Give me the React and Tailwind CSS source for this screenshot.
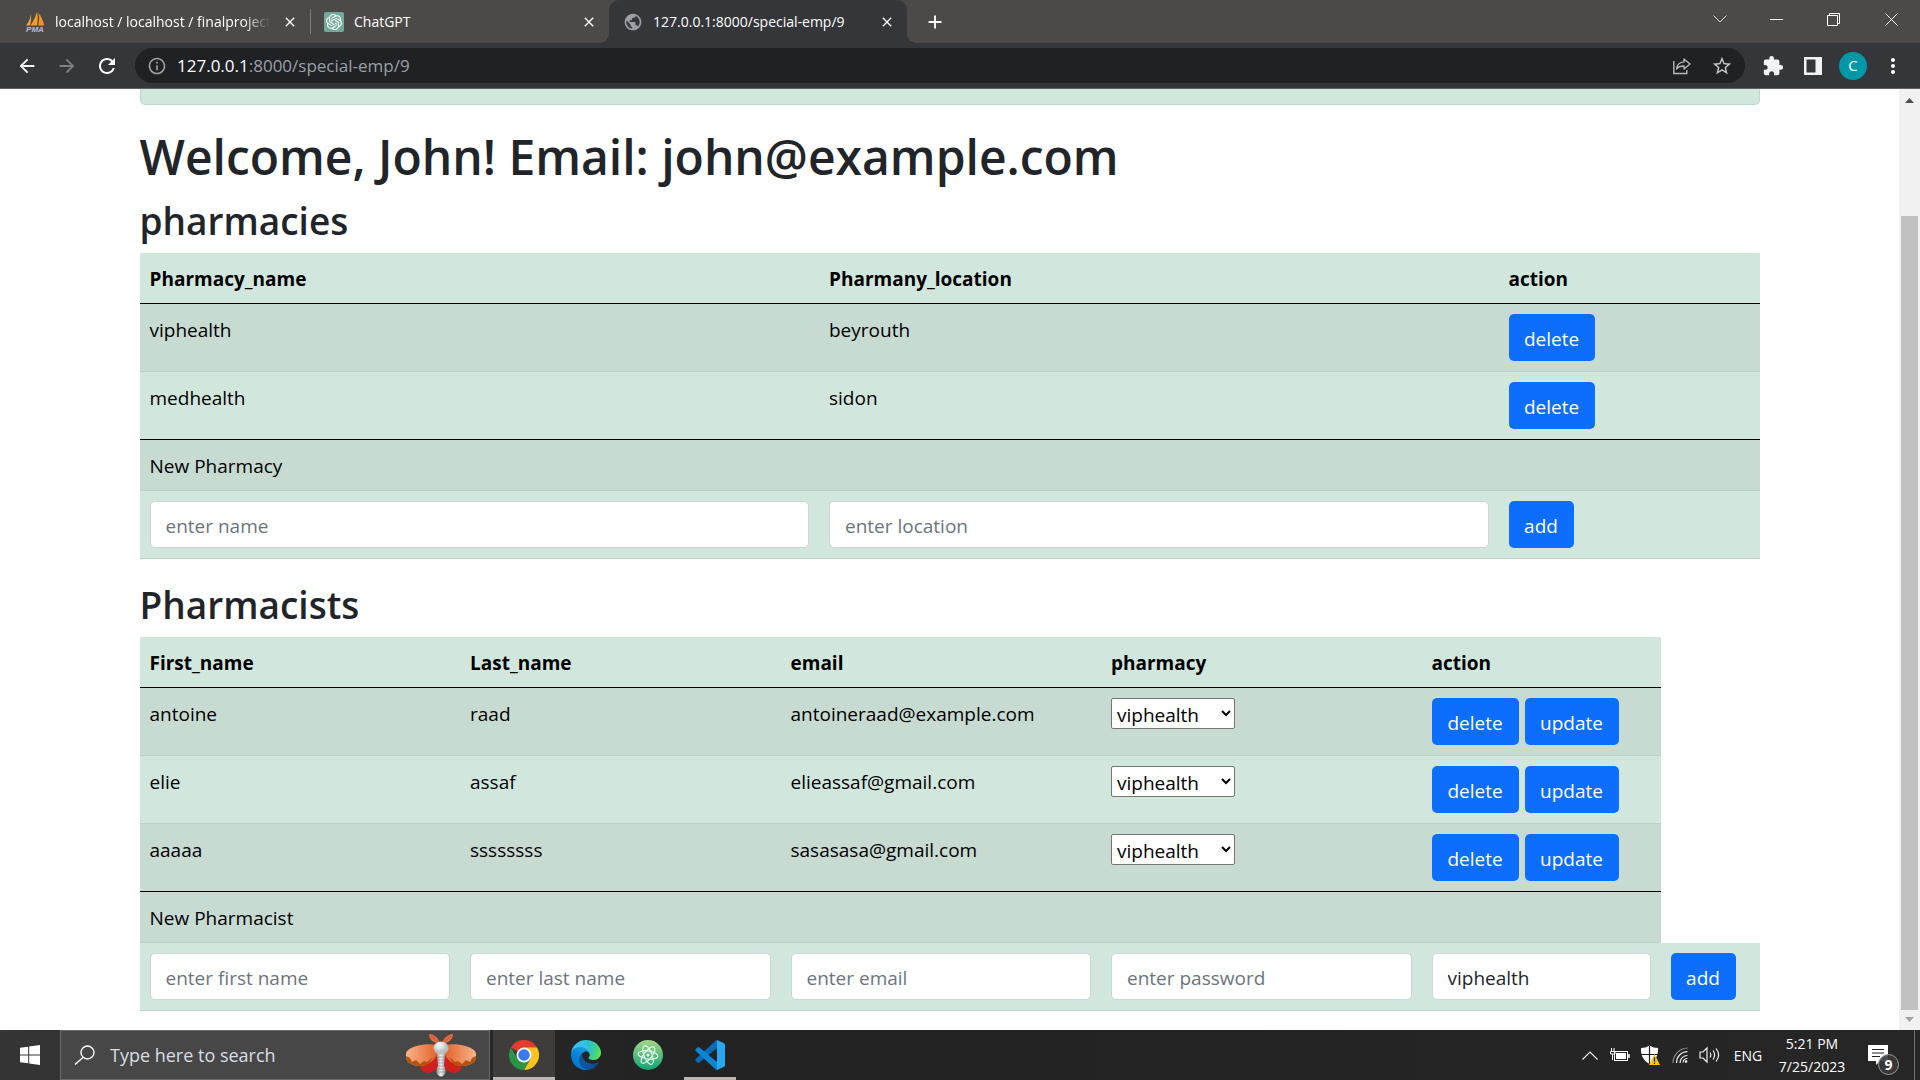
import React from "react";
import {
  MdArrowBack,
  MdArrowForward,
  MdRefresh,
  MdInfoOutline,
  MdStarBorder,
  MdExtension,
  MdPublic,
  MdMoreVert,
  MdClose,
  MdAdd,
} from "react-icons/md";
import { SiOpenai } from "react-icons/si";

/* ---------- icons ---------- */

function SailIcon() {
  return (
    <svg viewBox="0 0 20 20" className="size-5 shrink-0" aria-hidden="true">
      <path d="M6 2C5.500 6 4 10 1 13.500h4C6 10 6.300 6 6 2z" fill="#f0a640" />
      <path d="M12 0C10.500 5 8 10 5.500 13.500h6.500C13 9 13 4 12 0z" fill="#f59a23" />
      <path d="M13.500 1c1 4.500.8 9-.3 12.500H19C18.500 9 16 4 13.500 1z" fill="#f7931e" />
      <text x="10" y="19.500" textAnchor="middle" fontSize="8" fontWeight="700" fontStyle="italic" fontFamily="Liberation Sans, sans-serif" fill="#b9b9dc">PMA</text>
    </svg>
  );
}

function ShareIcon() {
  return (
    <svg viewBox="0 0 20 20" className="size-5" fill="none" stroke="#b4b6ba" strokeWidth="1.400" aria-hidden="true">
      <path d="M1.800 5v12.500h13V14" />
      <path d="M12 3l6 5-6 5v-3c-3.500 0-5.800.8-7.500 3C5 9 7.500 6.200 12 5.900z" strokeLinejoin="round" />
    </svg>
  );
}

function SidePanelIcon() {
  return (
    <svg viewBox="0 0 18 18" className="size-[18px]" aria-hidden="true">
      <path fillRule="evenodd" d="M0 0h18v18H0zM2.500 2.500v13h9v-13z" fill="#f1f3f4" />
    </svg>
  );
}

function WindowsIcon() {
  return (
    <svg viewBox="0 0 20 20" className="size-5" fill="#fff" aria-hidden="true">
      <path d="M0 2.800l8.200-1.100v7.800H0zM9.200 1.500L20 0v9.500H9.200zM0 10.500h8.200v7.800L0 17.200zM9.200 10.500H20V20L9.200 18.500z" />
    </svg>
  );
}

function MothIcon() {
  return (
    <svg viewBox="0 0 72 44" className="h-11 w-[72px]" aria-hidden="true">
      <defs>
        <linearGradient id="wingL" x1="0" x2="1">
          <stop offset="0" stopColor="#f7b48a" />
          <stop offset="1" stopColor="#e2622a" />
        </linearGradient>
        <linearGradient id="wingR" x1="1" x2="0">
          <stop offset="0" stopColor="#f7b48a" />
          <stop offset="1" stopColor="#e2622a" />
        </linearGradient>
        <linearGradient id="mothBody" x1="0" x2="1">
          <stop offset="0" stopColor="#9a9a9a" />
          <stop offset="0.500" stopColor="#f2f2f2" />
          <stop offset="1" stopColor="#9a9a9a" />
        </linearGradient>
        <radialGradient id="mothHead" cx="0.400" cy="0.300">
          <stop offset="0" stopColor="#ffffff" />
          <stop offset="1" stopColor="#bdbdbd" />
        </radialGradient>
      </defs>
      <path d="M35 10C33 4 28 1 24 1c0 5 3 8 10 10z" fill="#e8693f" />
      <path d="M37 10C39 4 44 1 48 1c0 5-3 8-10 10z" fill="#e8693f" />
      <path d="M34 10L26 3M38 10l8-7" stroke="#b8402a" strokeWidth="0.700" />
      <path d="M32 20L15 35c4 7 14 7 19-3z" fill="#cf1f1f" />
      <path d="M40 20l17 15c-4 7-14 7-19-3z" fill="#cf1f1f" />
      <path d="M33 12C22 10 8 12 2 18c-2 3-1 8 1 11 5 4 12 5 17 3 6-2 11-7 13-12z" fill="url(#wingL)" />
      <path d="M39 12c11-2 25 0 31 6 2 3 1 8-1 11-5 4-12 5-17 3-6-2-11-7-13-12z" fill="url(#wingR)" />
      <path d="M1 23l4 2 2 4 4-2 4 4 4-3 3 1 6-5c-2 4-5 8-8 9-5 1-12 0-17-4-1-2-2-4-2-6z" fill="#b4530f" />
      <path d="M71 23l-4 2-2 4-4-2-4 4-4-3-3 1-6-5c2 4 5 8 8 9 5 1 12 0 17-4 1-2 2-4 2-6z" fill="#b4530f" />
      <path d="M32 20h8l-1 13c2 3 2 7 0 9-2 2-4 2-6 0-2-2-2-6 0-9z" fill="url(#mothBody)" />
      <path d="M33 24h6M33 27h6M33 30h6M33 33h6M32 36h8M32 39h8" stroke="#888" strokeWidth="0.600" />
      <ellipse cx="36" cy="15" rx="7.500" ry="6.500" fill="url(#mothHead)" />
    </svg>
  );
}

function ChromeIcon() {
  return (
    <svg viewBox="0 0 48 48" className="size-[30px]" aria-hidden="true">
      <path d="M24 24L3.200 12A24 24 0 0 1 44.800 12z" fill="#e33b2e" />
      <path d="M24 12h20.800A24 24 0 0 1 24 48l10.400-18z" fill="#fcc31e" />
      <path d="M34.400 30L24 48A24 24 0 0 1 3.200 12l10.400 18z" fill="#2b9446" />
      <circle cx="24" cy="24" r="12" fill="#fff" />
      <circle cx="24" cy="24" r="9.300" fill="#3a7bec" />
    </svg>
  );
}

function EdgeIcon() {
  return (
    <svg viewBox="0 0 256 256" className="size-[30px]" aria-hidden="true">
      <defs>
        <linearGradient id="edgeDark" x1="63" x2="241" y1="177" y2="177" gradientUnits="userSpaceOnUse">
          <stop offset="0" stopColor="#0c59a4" />
          <stop offset="1" stopColor="#114a8b" />
        </linearGradient>
        <linearGradient id="edgeBlue" x1="157" x2="46" y1="99" y2="221" gradientUnits="userSpaceOnUse">
          <stop offset="0" stopColor="#1b9de2" />
          <stop offset="0.200" stopColor="#1595df" />
          <stop offset="0.700" stopColor="#0680d7" />
          <stop offset="1" stopColor="#0078d4" />
        </linearGradient>
        <radialGradient id="edgeGreen" cx="26" cy="47" r="240" gradientUnits="userSpaceOnUse">
          <stop offset="0" stopColor="#35c1f1" />
          <stop offset="0.300" stopColor="#34c1ed" />
          <stop offset="0.600" stopColor="#2fc2c4" />
          <stop offset="0.850" stopColor="#48d575" />
          <stop offset="1" stopColor="#66eb45" />
        </radialGradient>
      </defs>
      <path fill="url(#edgeDark)" d="M231,190.5c-3.4,1.8-6.9,3.4-10.5,4.7a101.5,101.5,0,0,1-35.8,6.5c-47.2,0-88.3-32.4-88.3-74.2A31.5,31.5,0,0,1,112.8,100.2c-42.7,1.8-53.7,46.3-53.7,72.3,0,73.7,67.8,81.1,82.5,81.1,7.9,0,19.8-2.3,27-4.6l1.3-.4a128.3,128.3,0,0,0,66.6-52.8,4,4,0,0,0-5.4-5.4Z" />
      <path fill="url(#edgeBlue)" d="M105.7,241.4a79.2,79.2,0,0,1-22.7-21.3A80.7,80.7,0,0,1,112.6,100.4c3.1-1.5,8.500-4.1,15.6-4a32.4,32.4,0,0,1,25.7,13,31.9,31.9,0,0,1,6.3,18.7c0-.2,24.5-79.6-80-79.6C36.3,48.5,0,90.2,0,126.9a130.6,130.6,0,0,0,12.1,56,128,128,0,0,0,156.4,67.1,75.6,75.6,0,0,1-62.8-8.5Z" />
      <path fill="url(#edgeGreen)" d="M152.3,148.9c-.8,1.1-3.3,2.5-3.3,5.7,0,2.6,1.7,5.1,4.7,7.2,14.4,10,41.5,8.7,41.6,8.7a59.6,59.6,0,0,0,30.3-8.3A61.4,61.4,0,0,0,256,109.2c.3-22.4-8-37.3-11.3-43.9C223.5,23.9,177.7,0,128,0A128,128,0,0,0,0,126.2c.5-36.5,36.8-66,80-66,3.5,0,23.5.3,42,10,16.3,8.6,24.9,18.9,30.8,29.2,6.2,10.7,7.3,24.1,7.3,29.5S157.3,142.3,152.3,148.9Z" />
    </svg>
  );
}

function AtomIcon() {
  return (
    <svg viewBox="0 0 30 30" className="size-[30px]" aria-hidden="true">
      <defs>
        <linearGradient id="atomBg" x1="0" x2="0" y1="0" y2="1">
          <stop offset="0" stopColor="#a5d58a" />
          <stop offset="1" stopColor="#0fa573" />
        </linearGradient>
      </defs>
      <circle cx="15" cy="15" r="15" fill="url(#atomBg)" />
      <g fill="none" stroke="#f2fbf4" strokeWidth="1.100">
        <ellipse cx="15" cy="15" rx="10" ry="4" transform="rotate(8 15 15)" />
        <ellipse cx="15" cy="15" rx="10" ry="4" transform="rotate(68 15 15)" />
        <ellipse cx="15" cy="15" rx="10" ry="4" transform="rotate(128 15 15)" />
      </g>
      <circle cx="15" cy="15" r="1.500" fill="#fff" />
    </svg>
  );
}

function CodeIcon() {
  return (
    <svg viewBox="0 0 30 30" className="size-[30px]" aria-hidden="true">
      <path d="M22 0v8L4.500 22.500a1.500 1.500 0 0 1-2 0L.7 20.800a1.300 1.300 0 0 1 0-1.900L20.500.8z" fill="#0a6cb4" />
      <path d="M22 30v-8L4.500 7.500a1.500 1.500 0 0 0-2 0L.7 9.200a1.300 1.300 0 0 0 0 1.900L20.500 29.200z" fill="#0b86d3" />
      <path d="M22 0l7 3.300a1.800 1.800 0 0 1 1 1.600v20.200a1.800 1.800 0 0 1-1 1.600L22 30z" fill="#27a9f1" />
    </svg>
  );
}

function BatteryIcon() {
  return (
    <svg viewBox="0 0 20 16" className="h-4 w-5" fill="none" stroke="#fff" aria-hidden="true">
      <rect x="4.500" y="4.500" width="13" height="9" />
      <path d="M6 6h10v6H6z" fill="#fff" stroke="none" />
      <path d="M19 7v4" strokeWidth="1.500" />
      <path d="M1.500 1v3M4 1v3M.5 4.500H5V7H.5zM2.500 7v6" />
    </svg>
  );
}

function ShieldIcon() {
  return (
    <svg viewBox="0 0 20 20" className="size-5" aria-hidden="true">
      <path d="M9.500.5C12 2.200 15 3 18 3c.3 7-2 12.500-8.500 16C3 15.500.7 10 1 3c3 0 6-.8 8.500-2.500z" fill="#fff" />
      <path d="M9.500.5V19M1 9.500h17" stroke="#1c1c1c" strokeWidth="1.200" />
      <path d="M14.500 9L20 20H9z" fill="#fcc419" />
      <path d="M14.500 12.500v4M14.500 17.500V19" stroke="#222" strokeWidth="1.300" />
    </svg>
  );
}

function WifiIcon() {
  return (
    <svg viewBox="0 0 16 16" className="size-4" fill="none" stroke="#e6e6e6" strokeWidth="1.200" aria-hidden="true">
      <path d="M1 16A15 15 0 0 1 15.500 1" stroke="#8d8d8d" />
      <path d="M4.500 16A11 11 0 0 1 15.500 4.700M8 16a7.500 7.500 0 0 1 7.500-7.500M11 15.500a4.500 4.500 0 0 1 4.500-4" />
      <circle cx="14" cy="14.500" r="1.300" fill="#fff" stroke="none" />
    </svg>
  );
}

function SpeakerIcon() {
  return (
    <svg viewBox="0 0 22 18" className="h-[18px] w-[22px]" fill="none" stroke="#eee" strokeWidth="1.200" aria-hidden="true">
      <path d="M1 6h3l4-4v14l-4-4H1z" />
      <path d="M11 6.500c1 1.500 1 3.500 0 5M14 4.500c2 2.800 2 6.200 0 9M17 2.500c3.200 4 3.200 9 0 13" />
    </svg>
  );
}

function NotificationIcon() {
  return (
    <svg viewBox="0 0 20 20" className="size-5" aria-hidden="true">
      <path d="M0 0h20v16h-8l-4 4v-4H0z" fill="#fff" />
      <path d="M4 4.500h12M4 8h12M4 11.500h8" stroke="#222" strokeWidth="1.200" />
    </svg>
  );
}

/* ---------- browser chrome ---------- */

function IconButton({ label, className = "", children }) {
  return (
    <button type="button" aria-label={label} className={`flex h-full items-center justify-center ${className}`}>
      {children}
    </button>
  );
}

function CloseTab() {
  return (
    <button type="button" aria-label="Close tab" className="flex size-5 shrink-0 items-center justify-center text-white">
      <MdClose className="size-4" />
    </button>
  );
}

function TabStrip() {
  return (
    <header className="flex h-[43px] shrink-0 bg-[#4c4a48] text-[14px] text-white">
      <div className="flex w-[310px] items-center gap-[10px] pr-[10px] pl-[25px]">
        <SailIcon />
        <span className="min-w-0 flex-1 overflow-hidden whitespace-nowrap [mask-image:linear-gradient(to_right,black_88%,transparent)]">
          localhost / localhost / finalproject
        </span>
        <CloseTab />
      </div>
      <div className="my-[9px] w-px bg-[#7d7b79]" />
      <div className="flex w-[298px] items-center gap-[10px] pr-[10px] pl-[13px]">
        <span className="flex size-5 shrink-0 items-center justify-center rounded-xs bg-[#74aa9c]">
          <SiOpenai className="size-4" />
        </span>
        <span className="min-w-0 flex-1">ChatGPT</span>
        <CloseTab />
      </div>
      <div className="relative flex w-[298px] items-center gap-[10px] rounded-t-[10px] bg-[#35363a] pr-[10px] pl-[14px]">
        <span className="absolute bottom-0 -left-[10px] size-[10px] bg-[radial-gradient(circle_at_0_0,transparent_10px,#35363a_10px)]" />
        <span className="absolute -right-[10px] bottom-0 size-[10px] bg-[radial-gradient(circle_at_100%_0,transparent_10px,#35363a_10px)]" />
        <MdPublic className="size-5 shrink-0 text-[#9aa0a6]" />
        <span className="min-w-0 flex-1 whitespace-nowrap">127.0.0.1:8000/special-emp/9</span>
        <CloseTab />
      </div>
      <IconButton label="New tab" className="w-14">
        <MdAdd className="size-[22px]" />
      </IconButton>
      <div className="ml-auto flex h-[38px]">
        <IconButton label="Search tabs" className="w-[57px]">
          <svg viewBox="0 0 14 8" className="h-2 w-[14px]" fill="none" stroke="#ddd"><path d="M.5.5L7 7 13.500.5" /></svg>
        </IconButton>
        <IconButton label="Minimize" className="w-[57px]">
          <span className="h-px w-[13px] bg-white" />
        </IconButton>
        <IconButton label="Restore" className="w-[57px]">
          <svg viewBox="0 0 13 13" className="size-[13px]" fill="none" stroke="#fff"><path d="M.5 2.500h10v10H.5zM2.500 2.500v-2h10v10h-2" /></svg>
        </IconButton>
        <IconButton label="Close" className="w-[58px]">
          <svg viewBox="0 0 13 13" className="size-[13px]" stroke="#fff"><path d="M.5.500l12 12M12.500.500l-12 12" /></svg>
        </IconButton>
      </div>
    </header>
  );
}

function Toolbar() {
  return (
    <nav className="flex h-[46px] shrink-0 items-center border-b border-[#5f6063] bg-[#35363a] pr-[7px] pl-[7px] text-white">
      <IconButton label="Back" className="w-10"><MdArrowBack className="size-[22px]" /></IconButton>
      <IconButton label="Forward" className="w-10 text-[#7f8084]"><MdArrowForward className="size-[22px]" /></IconButton>
      <IconButton label="Reload" className="w-10"><MdRefresh className="size-6" /></IconButton>
      <div className="ml-2 flex h-[35px] flex-1 items-center rounded-full bg-[#202124] pr-[3px] pl-3">
        <MdInfoOutline className="size-5 text-[#9aa0a6]" />
        <div className="ml-[10px] flex-1 text-[17px] text-[#9aa0a6]">
          <span className="text-white">127.0.0.1</span>:8000/special-emp/9
        </div>
        <IconButton label="Share" className="w-10"><ShareIcon /></IconButton>
        <IconButton label="Bookmark" className="w-10 text-[#c4c6ca]"><MdStarBorder className="size-[22px]" /></IconButton>
      </div>
      <IconButton label="Extensions" className="ml-2 w-10 text-[#f1f3f4]"><MdExtension className="size-[22px]" /></IconButton>
      <IconButton label="Side panel" className="w-10"><SidePanelIcon /></IconButton>
      <IconButton label="Profile" className="w-10">
        <span className="flex size-7 items-center justify-center rounded-full bg-[#0097a7] text-[15px]">C</span>
      </IconButton>
      <IconButton label="Menu" className="w-10"><MdMoreVert className="size-6" /></IconButton>
    </nav>
  );
}

/* ---------- page ---------- */

const control =
  "block h-[47px] w-full rounded-[5px] border border-[#ced4da] bg-white px-[15px] pt-[2px] text-[#212529] placeholder:text-[#6c757d]";

function Button({ className, children }) {
  return (
    <button type="button" className={`h-[47px] rounded-[5px] bg-[#0d6efd] pt-[2px] text-center text-white ${className}`}>
      {children}
    </button>
  );
}

function HeadCell({ children }) {
  return <th scope="col" className="h-[51px] border-b border-black bg-[#d1e7dd] px-[10px] pt-[2px] text-left font-bold">{children}</th>;
}

function Row({ striped, last, tall = true, children }) {
  return (
    <tr className={`align-top ${tall ? "h-[68px]" : "h-[51px]"} ${striped ? "*:bg-[#c7dbd2]" : "*:bg-[#d1e7dd]"} *:border-b ${last ? "*:border-black" : "*:border-[#bcd0c7]"} *:px-[10px] *:pt-[10px]`}>
      {children}
    </tr>
  );
}

function SectionTitle({ children }) {
  return <h2 className="mb-2 pt-[2px] text-[37px] leading-[48px] font-semibold text-[#212529]">{children}</h2>;
}

function Pharmacies() {
  const rows = [
    ["viphealth", "beyrouth"],
    ["medhealth", "sidon"],
  ];
  return (
    <table className="mb-5 w-full table-fixed border-separate border-spacing-0 text-black">
      <colgroup>
        <col />
        <col />
        <col className="w-[261px]" />
      </colgroup>
      <thead>
        <tr>
          <HeadCell>Pharmacy_name</HeadCell>
          <HeadCell>Pharmany_location</HeadCell>
          <HeadCell>action</HeadCell>
        </tr>
      </thead>
      <tbody>
        {rows.map(([name, place], i) => (
          <Row key={name} striped={i % 2 === 0} last={i === rows.length - 1}>
            <td>{name}</td>
            <td>{place}</td>
            <td><Button className="w-[86px]">delete</Button></td>
          </Row>
        ))}
        <Row striped tall={false}>
          <td colSpan={3}>New Pharmacy</td>
        </Row>
        <Row>
          <td><input aria-label="Pharmacy name" placeholder="enter name" className={control} /></td>
          <td><input aria-label="Pharmacy location" placeholder="enter location" className={control} /></td>
          <td><Button className="w-[65px]">add</Button></td>
        </Row>
      </tbody>
    </table>
  );
}

function Pharmacists() {
  const rows = [
    ["antoine", "raad", "antoineraad@example.com"],
    ["elie", "assaf", "elieassaf@gmail.com"],
    ["aaaaa", "ssssssss", "sasasasa@gmail.com"],
  ];
  return (
    <table className="w-full table-fixed border-separate border-spacing-0 text-black">
      <colgroup>
        <col />
        <col />
        <col />
        <col />
        <col className="w-[239px]" />
        <col className="w-[99px]" />
      </colgroup>
      <thead>
        <tr>
          <HeadCell>First_name</HeadCell>
          <HeadCell>Last_name</HeadCell>
          <HeadCell>email</HeadCell>
          <HeadCell>pharmacy</HeadCell>
          <HeadCell>action</HeadCell>
        </tr>
      </thead>
      <tbody>
        {rows.map(([first, lastName, email], i) => (
          <Row key={email} striped={i % 2 === 0} last={i === rows.length - 1}>
            <td>{first}</td>
            <td>{lastName}</td>
            <td>{email}</td>
            <td>
              <select aria-label={`Pharmacy of ${first}`} className="block h-[31px] w-[124px] rounded-xs border border-[#767676] bg-white pt-[2px] pl-px">
                <option>viphealth</option>
                <option>medhealth</option>
              </select>
            </td>
            <td>
              <div className="flex gap-[6px]">
                <Button className="w-[87px]">delete</Button>
                <Button className="w-[94px]">update</Button>
              </div>
            </td>
          </Row>
        ))}
        <Row striped tall={false}>
          <td colSpan={5}>New Pharmacist</td>
        </Row>
        <Row>
          <td><input aria-label="First name" placeholder="enter first name" className={control} /></td>
          <td><input aria-label="Last name" placeholder="enter last name" className={control} /></td>
          <td><input aria-label="Email" type="email" placeholder="enter email" className={control} /></td>
          <td><input aria-label="Password" type="password" placeholder="enter password" className={control} /></td>
          <td>
            <select aria-label="Pharmacy" className={`${control} appearance-none`}>
              <option>viphealth</option>
              <option>medhealth</option>
            </select>
          </td>
          <td><Button className="w-[65px]">add</Button></td>
        </Row>
      </tbody>
    </table>
  );
}

function Page() {
  return (
    <div className="flex min-h-0 flex-1 overflow-hidden bg-white">
      <main className="min-w-0 flex-1">
        <div className="mx-auto max-w-[1650px] px-[15px] text-[19px] leading-8">
          <div className="h-4 rounded-b-[5px] border border-t-0 border-[#badbcc] bg-[#d1e7dd]" />
          <h1 className="mt-[22px] mb-2 text-[48px] leading-[60px] font-semibold text-[#212529]">Welcome, John! Email: john@example.com</h1>
          <SectionTitle>pharmacies</SectionTitle>
          <Pharmacies />
          <SectionTitle>Pharmacists</SectionTitle>
          <Pharmacists />
        </div>
      </main>
      <div className="flex w-[21px] shrink-0 flex-col items-center bg-[#f1f1f1]" aria-hidden="true">
        <svg viewBox="0 0 21 21" className="size-[21px] shrink-0"><path d="M6 14h9l-4.500-5z" fill="#505050" /></svg>
        <div className="h-[106px]" />
        <div className="w-[17px] flex-1 bg-[#c1c1c1]" />
        <svg viewBox="0 0 21 20" className="h-5 w-[21px] shrink-0"><path d="M6 7h9l-4.500 5z" fill="#a3a3a3" /></svg>
      </div>
    </div>
  );
}

/* ---------- taskbar ---------- */

function TaskButton({ label, active, running, children }) {
  return (
    <button type="button" aria-label={label} className={`relative flex w-[62px] items-center justify-center ${active ? "bg-[#3e3d3b]" : ""}`}>
      {children}
      {active && <span className="absolute inset-x-0 bottom-0 h-[3px] bg-[#b9b5b4]" />}
      {running && <span className="absolute inset-x-[5px] bottom-0 h-[3px] bg-[#b9b5b4]" />}
    </button>
  );
}

function Taskbar() {
  return (
    <footer className="flex h-[50px] shrink-0 bg-linear-to-r from-[#353535] via-[#222222] via-35% to-[#262626] text-white">
      <IconButton label="Start" className="w-[60px]"><WindowsIcon /></IconButton>
      <label className="mr-[3px] flex w-[430px] items-center border border-[#6b6b6b] bg-[#474747] pr-3 pl-[13px]">
        <svg viewBox="0 0 21 20" className="h-5 w-[21px]" fill="none" stroke="#fff" strokeWidth="1.400" aria-hidden="true">
          <circle cx="13.500" cy="7.500" r="6.500" />
          <path d="M9 12.500L1 19.500" />
        </svg>
        <input aria-label="Search" placeholder="Type here to search" className="ml-[15px] min-w-0 flex-1 text-[18px] outline-none placeholder:text-[#d9dde2]" />
        <MothIcon />
      </label>
      <TaskButton label="Chrome" active><ChromeIcon /></TaskButton>
      <TaskButton label="Edge"><EdgeIcon /></TaskButton>
      <TaskButton label="Atom"><AtomIcon /></TaskButton>
      <TaskButton label="VS Code" running><CodeIcon /></TaskButton>
      <div className="ml-auto flex items-center">
        <IconButton label="Hidden icons" className="w-[30px]">
          <svg viewBox="0 0 16 9" className="h-[9px] w-4" fill="none" stroke="#eee" strokeWidth="1.200"><path d="M.5 8.500L8 1l7.500 7.500" /></svg>
        </IconButton>
        <IconButton label="Battery" className="w-[30px]"><BatteryIcon /></IconButton>
        <IconButton label="Security" className="w-[30px]"><ShieldIcon /></IconButton>
        <IconButton label="Network" className="w-[30px]"><WifiIcon /></IconButton>
        <IconButton label="Volume" className="w-[30px]"><SpeakerIcon /></IconButton>
        <button type="button" className="w-[46px] text-center text-[14px]">ENG</button>
        <button type="button" className="w-[82px] text-center text-[14px] leading-[23px]">
          5:21 PM
          <br />
          7/25/2023
        </button>
        <button type="button" aria-label="Notifications" className="relative ml-[15px] flex h-full w-[46px] items-center">
          <NotificationIcon />
          <span className="absolute top-6 left-[10px] flex size-[21px] items-center justify-center rounded-full border border-[#9a9a9a] bg-[#3a3a3a]/90 text-[14px] font-bold">9</span>
        </button>
        <span className="mr-[5px] h-full w-px bg-[#6f6f6f]" />
      </div>
    </footer>
  );
}

export default function App() {
  return (
    <div className="flex h-screen flex-col overflow-hidden font-['Open_Sans','Noto_Sans',sans-serif]">
      <TabStrip />
      <Toolbar />
      <Page />
      <Taskbar />
    </div>
  );
}
